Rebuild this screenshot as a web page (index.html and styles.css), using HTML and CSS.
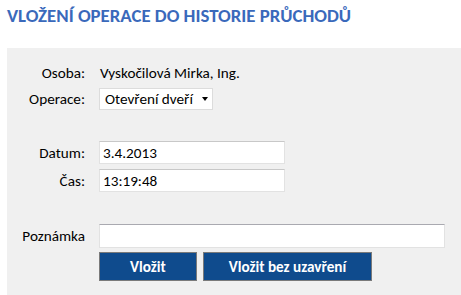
FILE: index.html
```html
<!DOCTYPE html>
<html lang="cs">
<head>
<meta charset="utf-8">
<title>Vložení operace</title>
<link rel="stylesheet" href="styles.css">
</head>
<body>
<div class="page">
  <h1 class="title">VLOŽENÍ OPERACE DO HISTORIE PRŮCHODŮ</h1>
  <div class="panel">
    <div class="row row-osoba">
      <span class="label">Osoba:</span>
      <span class="value">Vyskočilová Mirka, Ing.</span>
    </div>
    <div class="row row-operace">
      <span class="label">Operace:</span>
      <div class="select">
        <span class="select-text">Otevření dveří</span>
        <span class="select-arrow"></span>
      </div>
    </div>
    <div class="row row-datum">
      <span class="label">Datum:</span>
      <div class="input input-short">3.4.2013</div>
    </div>
    <div class="row row-cas">
      <span class="label">Čas:</span>
      <div class="input input-short">13:19:48</div>
    </div>
    <div class="row row-poznamka">
      <span class="label">Poznámka</span>
      <div class="input input-long"></div>
    </div>
    <div class="row row-buttons">
      <span class="label"></span>
      <div class="buttons">
        <button class="btn btn-vlozit">Vložit</button>
        <button class="btn btn-bez">Vložit bez uzavření</button>
      </div>
    </div>
  </div>
</div>
</body>
</html>
```

FILE: styles.css
```css
html, body {
  margin: 0;
  padding: 0;
  background: #ffffff;
}
body {
  font-family: Carlito, Calibri, "Open Sans", "Liberation Sans", sans-serif;
  font-size: 15.2px;
  color: #000000;
}
.page {
  padding-left: 7px;
  height: 295px;
  display: flex;
  flex-direction: column;
}
.title {
  margin: 0;
  padding-top: 4px;
  height: 48px;
  box-sizing: border-box;
  font-size: 18.8px;
  line-height: 23px;
  font-weight: bold;
  color: #3a69bb;
}
.panel {
  flex: 1;
  background: #f0f0f0;
  display: flex;
  flex-direction: column;
  padding-top: 14px;
}
.row {
  display: grid;
  grid-template-columns: 78px 1fr;
  column-gap: 14px;
  align-items: center;
}
.label {
  text-align: right;
}
.row-osoba {
  height: 22px;
}
.value {
  padding-left: 1px;
}
.row-operace {
  margin-top: 4px;
}
.select {
  width: 114px;
  height: 22px;
  box-sizing: border-box;
  background: #fff;
  border: 1px solid #dcdcdc;
  display: flex;
  align-items: center;
  justify-content: space-between;
  padding: 0 4px 0 5px;
}
.select-arrow {
  width: 0;
  height: 0;
  border-left: 3.5px solid transparent;
  border-right: 3.5px solid transparent;
  border-top: 4px solid #000;
}
.row-datum {
  margin-top: 31px;
}
.row-cas {
  margin-top: 5px;
}
.input {
  height: 23px;
  box-sizing: border-box;
  background: #fff;
  border: 1px solid #e2e2e2;
  border-top-color: #c8c8c8;
  padding: 0 3px;
  display: flex;
  align-items: center;
}
.input-short {
  width: 186px;
}
.row-poznamka {
  margin-top: 32px;
}
.input-long {
  width: 346px;
  height: 24px;
  border-top-color: #a9a9b0;
}
.row-buttons {
  margin-top: 4px;
}
.buttons {
  display: flex;
  gap: 6px;
}
.btn {
  height: 29px;
  box-sizing: border-box;
  background: #0f4b8d;
  border: 1px solid #7a7a7a;
  color: #ffffff;
  font-family: inherit;
  font-size: 15.2px;
  font-weight: bold;
  padding: 0;
}
.btn-vlozit {
  width: 98px;
}
.btn-bez {
  width: 169px;
}
```
